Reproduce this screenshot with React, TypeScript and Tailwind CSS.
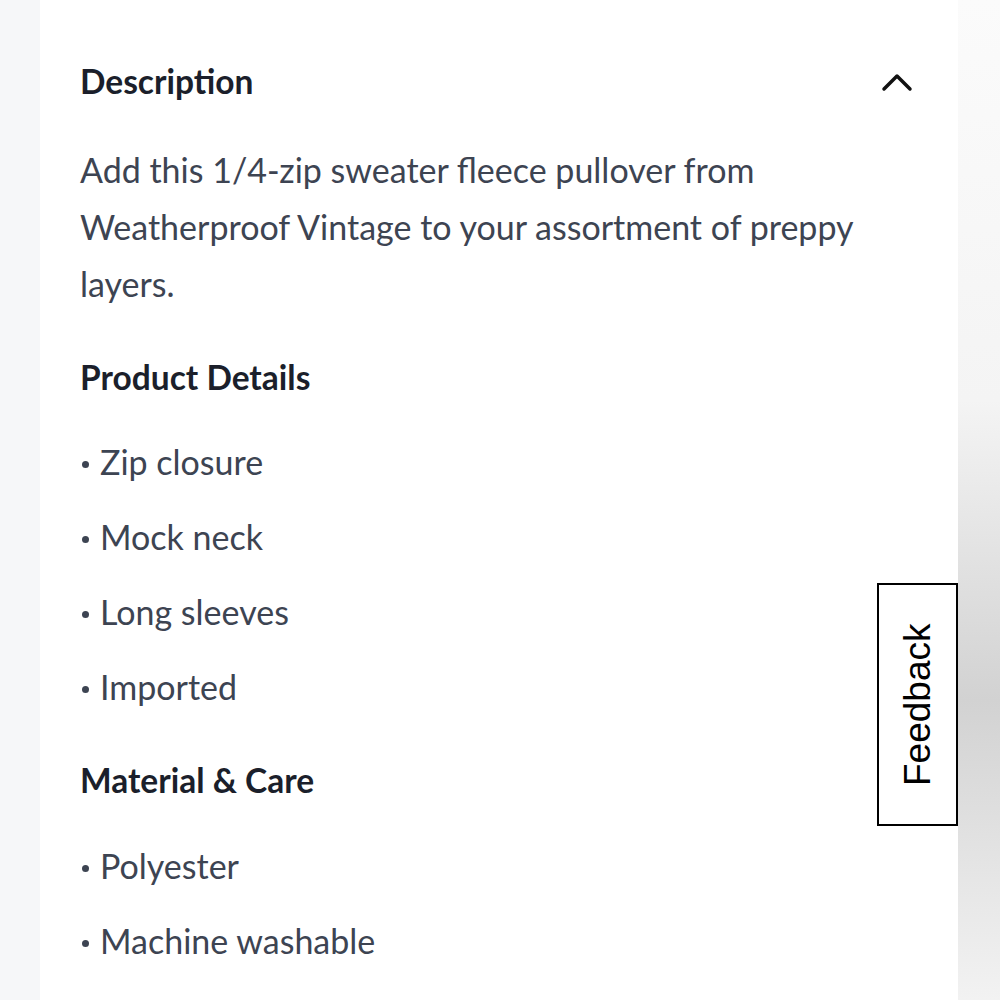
import React from 'react';

const details = ['Zip closure', 'Mock neck', 'Long sleeves', 'Imported'];
const care = ['Polyester', 'Machine washable'];

const Bullet: React.FC<{ text: string }> = ({ text }) => (
  <li className="h-[75px] flex items-center">
    <span className="shrink-0 w-[7px] h-[7px] rounded-full bg-[#3d4452] ml-[2px] mr-[11px] mt-[6px]" />
    {text}
  </li>
);

export default function App() {
  return (
    <div className="w-[1000px] h-[1000px] flex overflow-hidden bg-white font-['Lato',sans-serif]">
      <div className="w-[40px] bg-[#f6f7f9]" />
      <div className="flex-1 relative bg-white">
        <div className="pl-[40px] pr-[45px] pt-[58px]">
          <div className="flex items-center justify-between h-[46px]">
            <h2 className="text-[33.5px] font-bold text-[#1b1f2b]">Description</h2>
            <svg width="32" height="20" viewBox="0 0 32 20" fill="none" className="mt-[2px]">
              <path d="M3 17 L16 4 L29 17" stroke="#111" strokeWidth="3.5" strokeLinecap="round" strokeLinejoin="round" />
            </svg>
          </div>
          <p className="mt-[37px] text-[34px] leading-[57px] text-[#3d4452] max-w-[800px]">
            Add this 1/4-zip sweater fleece pullover from Weatherproof Vintage to your assortment of preppy layers.
          </p>
          <h3 className="mt-[47px] text-[33.5px] font-bold text-[#1b1f2b] leading-[36px]">Product Details</h3>
          <ul className="mt-[29px] text-[34px] text-[#3d4452]">
            {details.map(d => <Bullet key={d} text={d} />)}
          </ul>
          <h3 className="mt-[38px] text-[33.5px] font-bold text-[#1b1f2b] leading-[36px]">Material &amp; Care</h3>
          <ul className="mt-[30px] text-[34px] text-[#3d4452]">
            {care.map(d => <Bullet key={d} text={d} />)}
          </ul>
        </div>
        <button className="absolute right-0 top-[583px] w-[81px] h-[243px] border-2 border-black bg-white flex items-center justify-center">
          <span className="-rotate-90 whitespace-nowrap text-[37px] text-black font-['Liberation_Sans',sans-serif]">Feedback</span>
        </button>
      </div>
      <div className="w-[42px] bg-[linear-gradient(to_bottom,#fbfbfb_0%,#f4f4f4_40%,#d2d2d2_70%,#e6e6e6_88%,#f2f2f2_100%)]" />
    </div>
  );
}
